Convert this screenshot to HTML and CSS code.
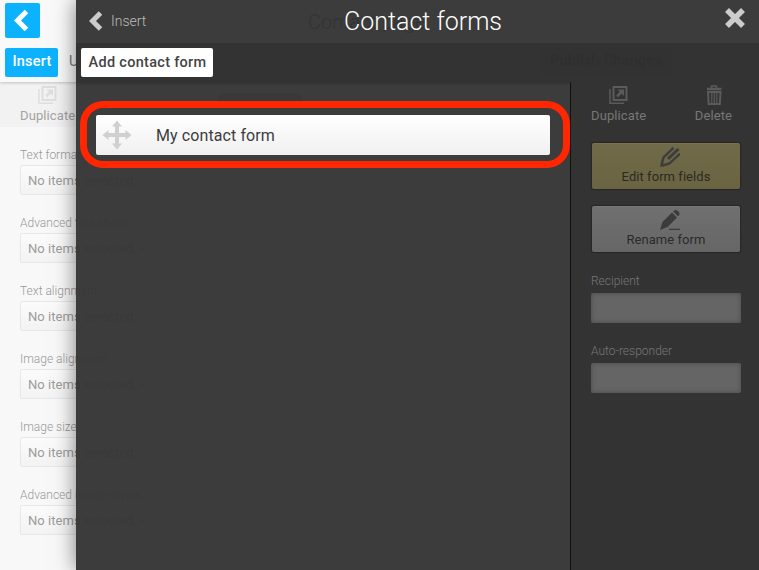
FILE: index.html
```html
<!DOCTYPE html>
<html lang="en">
<head>
<meta charset="utf-8">
<title>Contact forms</title>
<link rel="stylesheet" href="styles.css">
</head>
<body>
<div class="page">
  <header class="page-header">
    <button class="back"><svg width="35" height="35" viewBox="0 0 35 35"><path d="M21.5 8.500 12.500 17.500 21.500 26.500" fill="none" stroke="#fff" stroke-width="5"/></svg></button>
    <div class="page-tabs"><span class="tab active">Insert</span><span class="tab">U</span></div>
  </header>
  <aside class="styles-panel">
    <div class="strip"><div class="tool">
      <svg width="20" height="20" viewBox="0 0 20 20" fill="none" stroke="currentColor"><path d="M4.500 2h13v13h-13z" stroke-width="2"/><path d="M1 4v14.200h14" stroke-width="1.500"/><path d="M8 11.500l5-5" stroke-width="2.500"/><path d="M8.500 4.500H15V11z" fill="currentColor" stroke="none"/></svg>
      <span>Duplicate</span></div></div>
    <div class="style-fields">
      <label>Text formatting<span class="select">No items selected <i></i></span></label>
      <label>Advanced text styles<span class="select">No items selected <i></i></span></label>
      <label>Text alignment<span class="select">No items selected <i></i></span></label>
      <label>Image alignment<span class="select">No items selected <i></i></span></label>
      <label>Image size<span class="select">No items selected <i></i></span></label>
      <label>Advanced image styles<span class="select">No items selected <i></i></span></label>
    </div>
  </aside>
</div>

<section class="dialog">
  <header class="dialog-header">
    <a class="crumb"><svg width="14" height="20" viewBox="0 0 14 20"><path d="M11.500 2 3.500 10l8 8" fill="none" stroke="#ccc" stroke-width="5"/></svg>Insert</a>
    <div class="title"><span class="under-title">Contact page</span><h1>Contact forms</h1></div>
    <svg class="close" width="20" height="20" viewBox="0 0 20 20"><path d="M2 2 18 18M18 2 2 18" stroke="#ccc" stroke-width="5.500"/></svg>
  </header>
  <div class="dialog-bar"><button class="add">Add contact form</button><span class="publish">Publish Changes</span></div>
  <div class="dialog-body">
    <main class="forms">
      <div class="under-tab"></div>
      <div class="highlight"><div class="form-row">
        <svg width="30" height="30" viewBox="0 0 30 30" fill="#d0d0d0"><path d="M15 .500 20 6.500H17V13h6.500v-3l6 5-6 5v-3H17v6.500h3L15 29.500 10 23.500h3V17H6.500v3l-6-5 6-5v3H13V6.500h-3z"/></svg>
        <span>My contact form</span>
      </div></div>
    </main>
    <aside class="settings">
      <div class="tools">
        <div class="tool">
          <svg width="20" height="20" viewBox="0 0 20 20" fill="none" stroke="currentColor"><path d="M4.500 2h13v13h-13z" stroke-width="2"/><path d="M1 4v14.200h14" stroke-width="1.500"/><path d="M8 11.500l5-5" stroke-width="2.500"/><path d="M8.500 4.500H15V11z" fill="currentColor" stroke="none"/></svg>
          <span>Duplicate</span></div>
        <div class="tool">
          <svg width="20" height="20" viewBox="0 0 20 20" fill="none" stroke="currentColor"><path d="M7.500 3V1h5v2" stroke-width="1.500"/><path d="M3 4h14.500" stroke-width="2.500"/><path d="M4 7h12.500l-.700 12H4.700z" stroke-width="2"/><path d="M7.800 8v10M10.300 8v10M12.800 8v10" stroke-width="1.200"/></svg>
          <span>Delete</span></div>
      </div>
      <button class="action gold">
        <svg width="20" height="20" viewBox="0 0 20 20"><path d="M0 20 1.500 14.500 5.500 18.500z" fill="#3d3d3d"/><g fill="none" stroke="#3d3d3d"><path d="M1.500 17.500 3.500 10.500 13.500.800" stroke-width="2.400"/><path d="M2.500 18.500 9.500 16.500 20 6.500" stroke-width="2.400"/><path d="M8 11.800 18.500 2" stroke-width="3"/></g></svg>
        <span>Edit form fields</span></button>
      <button class="action">
        <svg width="20" height="20" viewBox="0 0 20 20" fill="#3b3b3b"><path d="M0 20 2.500 12 12 2.500l5 5L7.500 17zM13.200 1.400l.800-.700q2-1.500 4.200.500t.800 4l-1 1zM9 18.700h11v1.200H9z"/></svg>
        <span>Rename form</span></button>
      <label>Recipient<span class="input"></span></label>
      <label>Auto-responder<span class="input"></span></label>
    </aside>
  </div>
</section>
</body>
</html>
```
FILE: styles.css
```css
* { box-sizing: border-box; }
body { margin: 0; width: 759px; height: 570px; overflow: hidden; position: relative; font-family: Roboto, sans-serif; font-size: 13px; background: #f8f8f8; }
button { border: 0; padding: 0; font: inherit; }
svg { display: block; flex: none; }

.page { height: 570px; background: #f8f8f8; }
.page-header { height: 82px; padding: 3px 5px 0; background: #f9f9f9; box-shadow: 0 1px 3px #0003; position: relative; }
.back { display: block; width: 35px; height: 35px; background: #0db2ff; border-radius: 2px; }
.page-tabs { display: flex; margin-top: 10px; gap: 3px; }
.tab { height: 29px; padding: 0 8px; line-height: 28px; font-size: 14.500px; color: #777; }
.tab.active { width: 53px; padding: 0 0 0 1px; text-align: center; font-weight: 500; color: #fff; background: #0db2ff; border-radius: 2px; letter-spacing: .250px; }
.strip { height: 45px; padding: 3px 0 0 20px; display: flex; background: #f2f2f2; color: #dedede; }
.tool { display: flex; flex-direction: column; align-items: center; line-height: 15px; gap: 3px; letter-spacing: .1px; }
.tool svg { margin-left: 1px; }
.strip .tool span { color: #a3a3a3; }
.style-fields { padding: 20px; display: flex; flex-direction: column; gap: 22px; }
.style-fields label { display: block; width: 150px; height: 46px; font-size: 12px; line-height: 16px; color: #999; font-weight: 300; white-space: nowrap; }
.select { display: flex; align-items: center; gap: 6px; height: 30px; margin-top: 2px; padding: 2px 0 0 7px; border: 1px solid #e7e7e7; border-radius: 2px; background: linear-gradient(#fbfbfb, #f3f3f3); font-size: 13px; font-weight: 400; color: #9c9c9c; letter-spacing: .050px; }
.select i { border: 3px solid transparent; border-top-color: #ccc; margin-top: 3px; }

.dialog { position: absolute; left: 76px; top: 0; width: 683px; height: 570px; display: flex; flex-direction: column; background: rgba(52, 52, 52, .96); box-shadow: 0 0 20px rgba(0, 0, 0, .5); }
.dialog-header { height: 43px; display: grid; grid-template-columns: 200px 1fr 200px; background: #3c3c3c; }
.crumb { display: flex; align-items: center; gap: 8px; height: 41px; padding-left: 13px; font-size: 14px; font-weight: 300; color: #bbb; letter-spacing: 0; }
.title { display: grid; justify-items: end; align-items: center; height: 42px; }
.title > * { grid-area: 1 / 1; }
h1 { margin: 1px 57px 0 0; font-size: 25px; line-height: 42px; font-weight: 300; color: #fff; white-space: nowrap; }
.under-title { justify-self: start; margin: 1px 0 0 32px; font-size: 20px; font-weight: 300; color: #333; }
.close { justify-self: end; margin: 8px 14px 0 0; }
.dialog-bar { height: 39px; display: flex; align-items: flex-start; justify-content: space-between; padding: 5px 87px 0 5px; background: #333; }
.add { width: 132px; height: 29px; padding: 0 0 1px 1px; border-radius: 2px; background: #fff; color: #444; font-size: 14.500px; font-weight: 500; white-space: nowrap; letter-spacing: .3px; }
.publish { height: 28px; width: 132px; text-align: center; line-height: 26px; font-size: 14.500px; font-weight: 500; color: #2f2f2f; background: #323232; letter-spacing: .2px; }
.dialog-body { flex: 1; display: flex; }
.forms { width: 494px; padding-top: 11px; box-shadow: inset 0 3px 3px -2px #0003; }
.under-tab { width: 84px; height: 8px; margin-left: 142px; border-radius: 6px 6px 0 0; background: #393939; }
.highlight { width: 490px; height: 67px; margin-left: 4px; padding: 7px 9px; border: 7px solid #ff2600; border-radius: 23px; background: #3c3c3c; }
.form-row { display: flex; align-items: center; gap: 24px; width: 454px; height: 40px; padding-left: 6px; border-radius: 2px; background: linear-gradient(#fff, #f0f0f0); color: #3d3d3d; font-size: 16px; letter-spacing: .1px; }
.settings { width: 189px; padding: 3px 18px 0 20px; border-left: 1px solid #111; background: #333; color: #6b6b6b; }
.settings .tools { display: flex; justify-content: space-between; height: 58px; padding-right: 9px; }
.settings .tools svg { color: #5b5b5b; }
.settings .tools span { color: #777; }
.action { display: flex; flex-direction: column; align-items: center; width: 148px; height: 46px; padding-top: 3px; margin: 0 0 17px 1px; gap: 3px; border: 1px solid #777; border-width: 1px 0 0; border-radius: 2px; background: linear-gradient(#707070, #666); box-shadow: 0 0 1px 1px #262626; color: #2b2b2b; line-height: 16px; letter-spacing: .050px; }
.action svg { margin-left: 8px; }
.action span { margin-top: -1px; }
.action.gold { border-color: #7a724a; background: linear-gradient(#716a48, #6b6443); color: #2b2a22; }
.settings label { display: block; width: 150px; height: 48px; margin-bottom: 22px; font-size: 12px; line-height: 16px; font-weight: 300; color: #777; }
.action + label { margin-top: 21px; }
.input { display: block; height: 30px; margin-top: 4px; border-radius: 2px; background: #656565; box-shadow: inset 0 0 5px #4a4a4a; }
```
